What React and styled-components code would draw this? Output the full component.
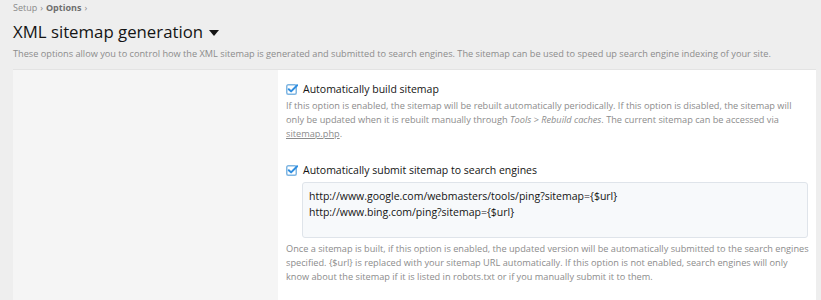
import React from "react"
import styled, { createGlobalStyle } from "styled-components"

const GlobalStyle = createGlobalStyle`
  html, body {
    margin: 0;
    padding: 0;
    background: #eeeeee;
    font-family: "Open Sans", "Noto Sans", sans-serif;
    color: #141414;
  }
`

const Page = styled.div`
  padding: 2px 5px 0 13px;
`

const Breadcrumb = styled.div`
  font-size: 9px;
  line-height: 12px;
  color: #8a8a8a;
  b {
    font-weight: 700;
    color: #6e6e6e;
  }
  span {
    margin: 0 3px;
  }
`

const Title = styled.h1`
  margin: 6px 0 0;
  font-size: 16.8px;
  font-weight: 400;
  line-height: 24px;
  display: flex;
  align-items: center;
  gap: 6px;
  color: #141414;
`

const Caret = styled.span`
  width: 0;
  height: 0;
  border-left: 5px solid transparent;
  border-right: 5px solid transparent;
  border-top: 6px solid #141414;
  margin-top: 2px;
`

const Description = styled.p`
  margin: 3px 0 0;
  font-size: 9.2px;
  line-height: 14px;
  color: #8c8c8c;
`

const Block = styled.div`
  margin-top: 8px;
  display: grid;
  grid-template-columns: 265px 1fr;
  border-top: 1px solid #e3e3e3;
  min-height: 240px;
`

const LabelCol = styled.div`
  background: #f5f5f5;
`

const FieldCol = styled.div`
  background: #ffffff;
  padding: 11px 3px 0 8px;
`

const Option = styled.div`
  margin-bottom: ${p => p.$gap || 0}px;
`

const CheckRow = styled.label`
  display: flex;
  align-items: center;
  gap: 5px;
  font-size: 10.5px;
  line-height: 16px;
  color: #141414;
`

const Hint = styled.div`
  font-size: 9.2px;
  line-height: 14px;
  color: #8c8c8c;
  margin-top: 2px;
  max-width: ${p => p.$max || "none"};
  i {
    font-style: italic;
  }
  u {
    text-decoration: underline;
  }
`

const Textarea = styled.div`
  margin: 4px 5px 4px 16px;
  height: 56px;
  box-sizing: border-box;
  background: #f7f9fb;
  border: 1px solid #dfe4ea;
  border-radius: 3px;
  padding: 5px 6px;
  font-size: 10.5px;
  line-height: 16px;
  color: #141414;
`

const CheckIcon = () => (
  <svg width="12" height="12" viewBox="0 0 12 12">
    <rect x="0.75" y="1.75" width="9.5" height="9.5" rx="1.5" fill="none" stroke="#7fb6e2" strokeWidth="1.5" />
    <path d="M2.8 6.2 L5.1 8.4 L11.2 2.2" fill="none" stroke="#2f8ee0" strokeWidth="2" strokeLinecap="round" strokeLinejoin="round" />
  </svg>
)

export default function App() {
  return (
    <>
      <GlobalStyle />
      <Page>
        <Breadcrumb>
          Setup<span>›</span><b>Options</b><span>›</span>
        </Breadcrumb>
        <Title>
          XML sitemap generation <Caret />
        </Title>
        <Description>
          These options allow you to control how the XML sitemap is generated and submitted to search engines. The sitemap can be used to speed up search engine indexing of your site.
        </Description>
        <Block>
          <LabelCol />
          <FieldCol>
            <Option $gap={21}>
              <CheckRow>
                <CheckIcon />
                Automatically build sitemap
              </CheckRow>
              <Hint $max="512px">
                If this option is enabled, the sitemap will be rebuilt automatically periodically. If this option is disabled, the sitemap will only be updated when it is rebuilt manually through <i>Tools &gt; Rebuild caches</i>. The current sitemap can be accessed via <u>sitemap.php</u>.
              </Hint>
            </Option>
            <Option>
              <CheckRow>
                <CheckIcon />
                Automatically submit sitemap to search engines
              </CheckRow>
              <Textarea>
                http://www.google.com/webmasters/tools/ping?sitemap={"{$url}"}
                <br />
                http://www.bing.com/ping?sitemap={"{$url}"}
              </Textarea>
              <Hint>
                Once a sitemap is built, if this option is enabled, the updated version will be automatically submitted to the search engines specified. {"{$url}"} is replaced with your sitemap URL automatically. If this option is not enabled, search engines will only know about the sitemap if it is listed in robots.txt or if you manually submit it to them.
              </Hint>
            </Option>
          </FieldCol>
        </Block>
      </Page>
    </>
  )
}
